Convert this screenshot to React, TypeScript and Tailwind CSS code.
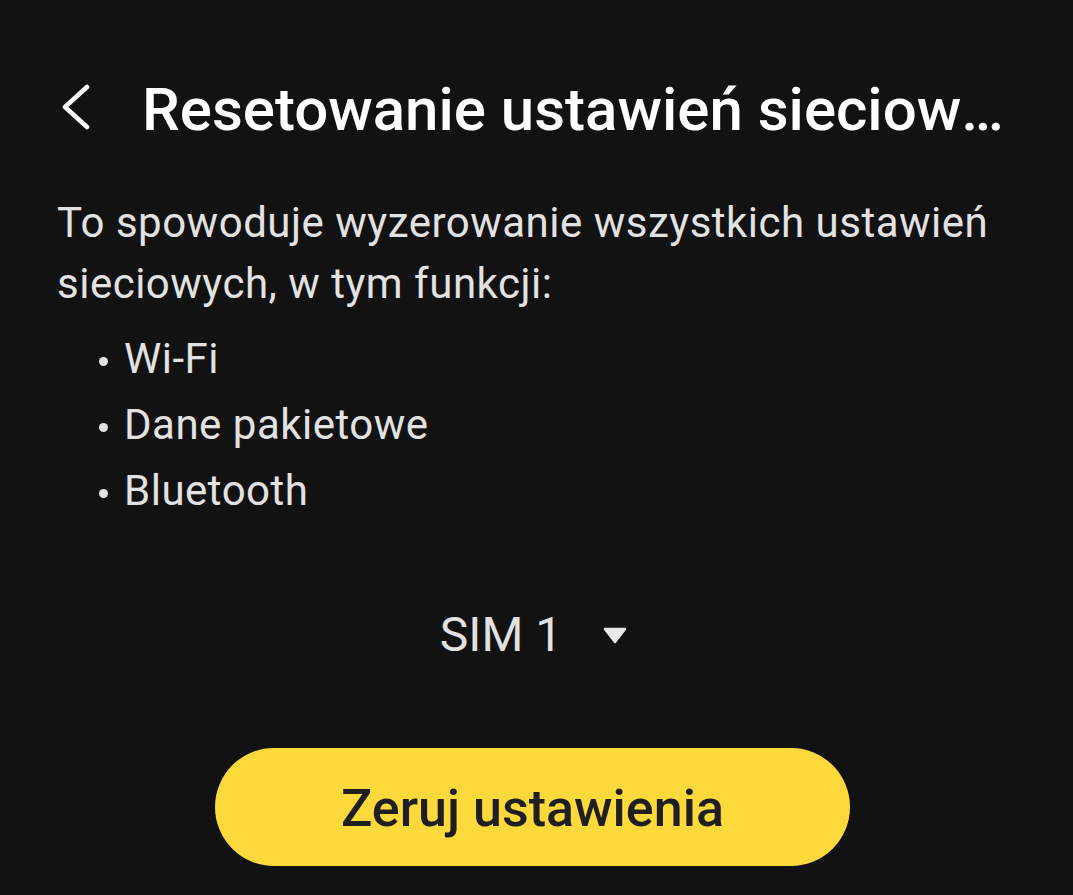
const FEATURES = ['Wi-Fi', 'Dane pakietowe', 'Bluetooth'];

export default function App() {
  return (
    <div
      className="w-[1073px] h-[895px] bg-[#121212] text-white overflow-hidden flex flex-col"
      style={{ fontFamily: 'Roboto, "Noto Sans", sans-serif' }}
    >
      {/* Header */}
      <header className="flex items-start mt-[80px] pl-[57px] pr-[56px]">
        <svg width="36" height="48" viewBox="0 0 36 48" className="shrink-0 mt-[2px]">
          <path
            d="M30 5 L8 25 L30 45"
            fill="none"
            stroke="#ffffff"
            strokeWidth="4.5"
            strokeLinecap="round"
            strokeLinejoin="round"
          />
        </svg>
        <h1 className="ml-[49px] text-[60px] font-medium leading-[60px] truncate text-white">
          Resetowanie ustawień sieciowych
        </h1>
      </header>

      {/* Body */}
      <div className="px-[57px] mt-[52px] text-[#e2e2e2] text-[42px] tracking-[0.5px]">
        <p className="leading-[61px]">
          To spowoduje wyzerowanie wszystkich ustawień
          <br />
          sieciowych, w tym funkcji:
        </p>
        <ul className="mt-[12px] pl-[42px]">
          {FEATURES.map((f) => (
            <li key={f} className="flex items-center leading-[66px]">
              <span className="w-[9px] h-[9px] rounded-full bg-[#e2e2e2] mr-[16px] mt-[4px]" />
              {f}
            </li>
          ))}
        </ul>
      </div>

      {/* SIM selector */}
      <div className="flex justify-center pr-[6px] mt-[87px]">
        <button className="flex items-center gap-[41px] text-[#e2e2e2] text-[48px] leading-[48px]">
          SIM 1
          <svg width="24" height="18" viewBox="0 0 24 18" className="mt-[2px]">
            <path
              d="M2 2 H22 L12 15 Z"
              fill="#e8e8e8"
              stroke="#e8e8e8"
              strokeWidth="2.5"
              strokeLinejoin="round"
            />
          </svg>
        </button>
      </div>

      {/* Action */}
      <div className="flex pl-[215px] mt-[89px]">
        <button className="w-[635px] h-[118px] pt-[4px] rounded-full bg-[#fdd93b] text-[#1f1f1f] text-[52px] font-medium">
          Zeruj ustawienia
        </button>
      </div>
    </div>
  );
}
